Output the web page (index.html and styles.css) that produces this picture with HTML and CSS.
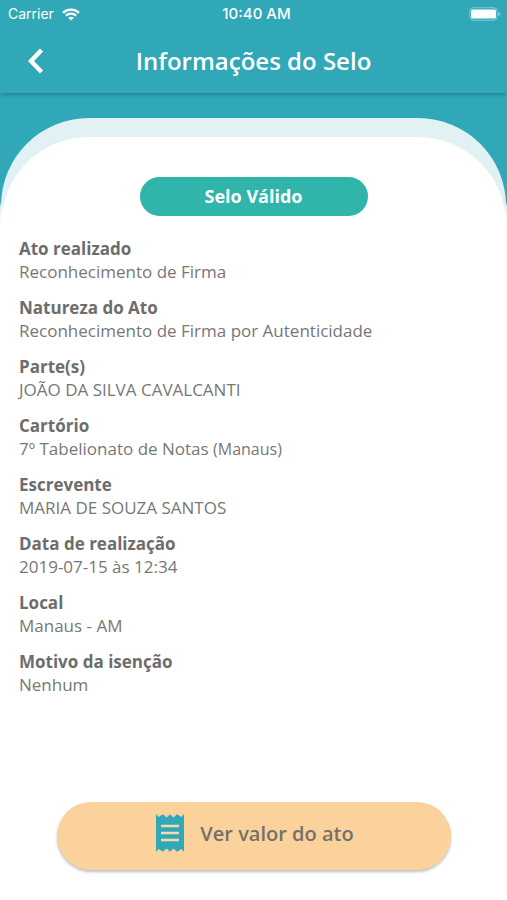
FILE: index.html
```html
<!DOCTYPE html>
<html lang="pt-BR">
<head>
<meta charset="utf-8">
<meta name="viewport" content="width=device-width, initial-scale=1">
<title>Informações do Selo</title>
<link rel="stylesheet" href="styles.css">
</head>
<body>
<div class="top">
  <div class="status">
    <div class="carrier">
      <span>Carrier</span>
      <svg class="wifi" viewBox="0 0 18 13" aria-hidden="true">
        <path d="M1 4.800C5.500 .6 12.500 .6 17 4.800M3.900 7.700C6.800 5 11.200 5 14.100 7.700" fill="none" stroke="#fff" stroke-width="2.300"/>
        <path d="M9 12.600 6.200 9.800C7.800 8.400 10.200 8.400 11.800 9.800Z" fill="#fff"/>
      </svg>
    </div>
    <time class="clock">10:40 AM</time>
    <svg class="battery" viewBox="0 0 32 14" aria-hidden="true">
      <rect x=".75" y=".75" width="27.500" height="12.500" rx="3.500" fill="none" stroke="#fff" stroke-opacity=".4"/>
      <rect x="2" y="2.500" width="25" height="9" rx="1.500" fill="#fff"/>
      <path d="M29.500 5v4q1.800-.5 1.800-2t-1.800-2" fill="#fff" fill-opacity=".5"/>
    </svg>
  </div>
  <header class="bar">
    <button class="back" type="button" aria-label="Voltar">
      <svg viewBox="0 0 16 26" aria-hidden="true"><path d="M13.500 2 3 13 13.500 24" fill="none" stroke="#fff" stroke-width="4.400"/></svg>
    </button>
    <h1>Informações do Selo</h1>
  </header>
</div>
<div class="backdrop">
  <div class="halo">
    <main class="sheet">
      <p class="badge">Selo Válido</p>
      <dl class="details">
        <div><dt>Ato realizado</dt><dd>Reconhecimento de Firma</dd></div>
        <div><dt>Natureza do Ato</dt><dd>Reconhecimento de Firma por Autenticidade</dd></div>
        <div><dt>Parte(s)</dt><dd>JOÃO DA SILVA CAVALCANTI</dd></div>
        <div><dt>Cartório</dt><dd>7º Tabelionato de Notas <span class="city">(Manaus)</span></dd></div>
        <div><dt>Escrevente</dt><dd>MARIA DE SOUZA SANTOS</dd></div>
        <div><dt>Data de realização</dt><dd>2019-07-15 às 12:34</dd></div>
        <div><dt>Local</dt><dd>Manaus - AM</dd></div>
        <div><dt>Motivo da isenção</dt><dd>Nenhum</dd></div>
      </dl>
      <button class="action" type="button">
        <svg viewBox="0 0 28 38" aria-hidden="true">
          <path d="M0 0 2.500 3 7 .2 10.500 3.500 14 .2 17.500 3.500 21 .2 25.500 3 28 0V38L25.500 35 21 37.800 17.500 34.500 14 37.800 10.500 34.500 7 37.800 2.500 35 0 38Z" fill="#30a8b8"/>
          <path d="M5 12h18M5 19h18M5 26h18" stroke="#f6dba8" stroke-width="2.500"/>
        </svg>
        <span>Ver valor do ato</span>
      </button>
    </main>
  </div>
</div>
</body>
</html>
```
FILE: styles.css
```css
* {
  box-sizing: border-box;
}

body {
  display: flex;
  flex-direction: column;
  min-height: 100vh;
  margin: 0;
  background: #fff;
  color: #6d6d6d;
  font-family: "Open Sans", sans-serif;
}

button {
  border: 0;
  font: inherit;
  cursor: pointer;
}

.top {
  position: relative;
  background: #30a8b8;
  color: #fff;
  box-shadow: 0 1px 5px rgba(0, 0, 0, 0.3);
}

.status {
  display: grid;
  grid-template-columns: 1fr auto 1fr;
  align-items: center;
  height: 28px;
  padding: 0 6px 0 8px;
  font: 14px/28px Inter, sans-serif;
}

.carrier {
  display: flex;
  align-items: center;
  gap: 8px;
}

.wifi {
  width: 18px;
  height: 13px;
}

.clock {
  padding-left: 4px;
  font-size: 15px;
  font-weight: 500;
}

.battery {
  justify-self: end;
  width: 32px;
  height: 14px;
}

.bar {
  display: grid;
  grid-template-columns: 56px 1fr 56px;
  align-items: center;
  height: 65px;
}

.back {
  display: flex;
  justify-content: flex-end;
  padding: 0 12px 0 0;
  background: none;
}

.back svg {
  width: 16px;
  height: 26px;
}

h1 {
  margin: 0;
  font-size: 24px;
  font-weight: 600;
  line-height: 32px;
  text-align: center;
}

.backdrop {
  display: flex;
  flex: 1;
  padding-top: 25px;
  background: linear-gradient(#30a8b8 108px, #e2f1f4 114px, #fff 132px);
}

.halo {
  display: flex;
  flex: 1;
  margin: 0 1px;
  padding-top: 19px;
  border-radius: 88px 88px 0 0;
  background: linear-gradient(#e2f1f4 87px, #fff 107px);
}

.sheet {
  display: flex;
  flex: 1;
  flex-direction: column;
  padding: 40px 18px 30px;
  border-radius: 88px 88px 0 0;
  background: #fff;
}

.badge {
  align-self: center;
  width: 228px;
  margin: 0 0 21px;
  border-radius: 20px;
  background: #2fb5aa;
  color: #fff;
  font-size: 18px;
  font-weight: 700;
  line-height: 39px;
  text-align: center;
}

.details {
  display: grid;
  gap: 12px;
  margin: 0 0 auto;
  font-size: 17px;
  line-height: 23px;
}

dt {
  font-weight: 700;
}

dd {
  margin: 0;
  color: #777;
  line-height: 24px;
}

.city {
  font-size: 16px;
}

.action {
  display: flex;
  align-items: center;
  justify-content: center;
  gap: 16px;
  height: 68px;
  margin: 0 37px 0 38px;
  padding: 0 0 6px 2px;
  border-radius: 34px;
  background: #fbd29b;
  box-shadow: 0 2px 3px rgba(0, 0, 0, 0.25);
  color: #757068;
  font-size: 20px;
  font-weight: 600;
}

.action svg {
  width: 28px;
  height: 38px;
}
```
